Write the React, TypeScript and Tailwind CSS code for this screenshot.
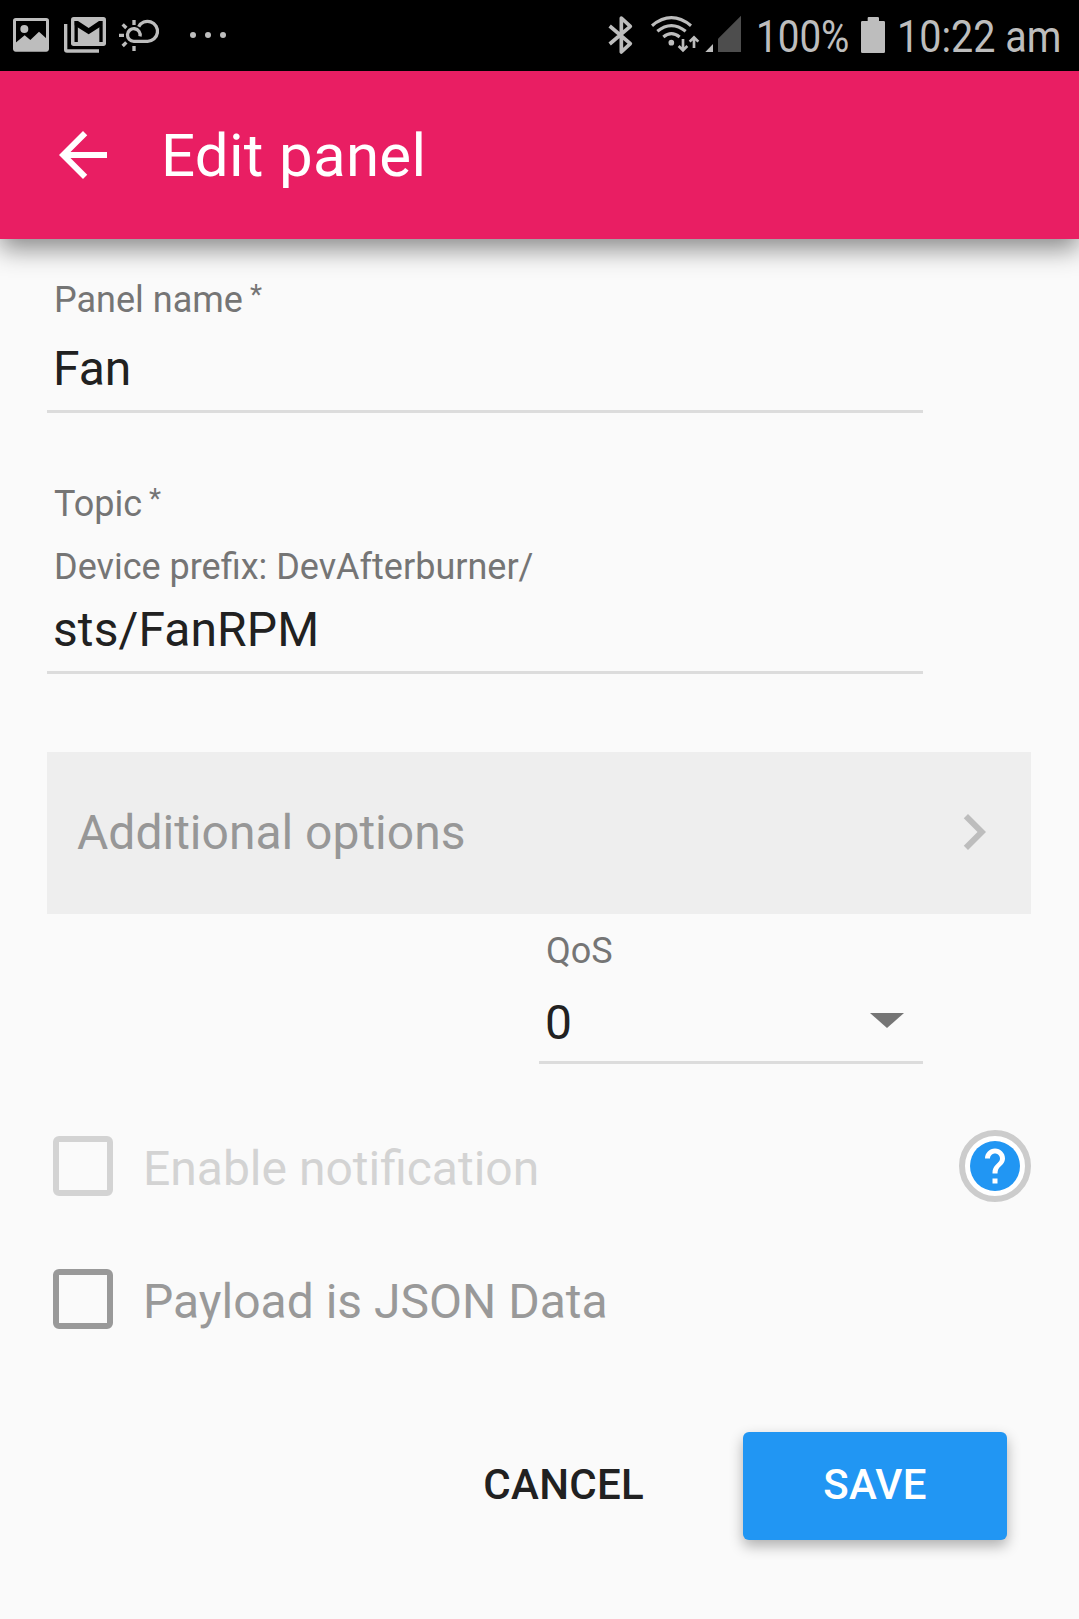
import type { ReactNode } from "react";

function PhotoIcon() {
  return (
    <svg viewBox="36 48 114 114" className="ml-3 h-[38px] w-[38px] shrink-0">
      <rect x="43.500" y="58.500" width="99" height="92" rx="4" fill="none" stroke="#bdbdbd" strokeWidth="9" />
      <circle cx="73" cy="87" r="12" fill="#bdbdbd" />
      <path d="M46 129 L74 106 L91 120 L117 95 L141 117 V151 H46Z" fill="#bdbdbd" />
    </svg>
  );
}

function MailStackIcon() {
  return (
    <svg viewBox="189 48 132 114" className="ml-[13px] h-[38px] w-11 shrink-0">
      <path d="M197 72 V149 Q197 153 201 153 H297" fill="none" stroke="#bdbdbd" strokeWidth="10" />
      <rect x="213" y="51" width="105" height="87" rx="8" fill="#bdbdbd" />
      <path d="M228.500 126 V76 M303 76 V126" fill="none" stroke="#000" strokeWidth="10" />
      <path d="M223 63 H234 L266 84 L297 63 H308 V76 L266 103 L223 76Z" fill="#000" />
    </svg>
  );
}

function WeatherIcon() {
  return (
    <svg viewBox="354 54 126 102" className="ml-[11px] h-[34px] w-[42px] shrink-0" fill="none" stroke="#bdbdbd" strokeWidth="10">
      <path d="M420 109 A19 19 0 1 0 402 124 H443 A30 30 0 1 0 416 80" />
      <path d="M402 60 V75 M402 138 V153 M357 106 H372 M368 73 L379 84 M368 138 L379 127" />
    </svg>
  );
}

function BluetoothIcon() {
  return (
    <svg viewBox="54 45 78 120" className="h-10 w-[26px] shrink-0" fill="none" stroke="#bdbdbd" strokeWidth="11" strokeLinejoin="round">
      <path d="M59 78 L121 131 L94 156 V54 L121 79 L59 132" />
    </svg>
  );
}

function WifiIcon() {
  return (
    <svg viewBox="180 45 150 114" className="-mt-0.5 ml-4 h-[38px] w-[50px] shrink-0" fill="none" stroke="#bdbdbd" strokeWidth="9.500">
      <path d="M186 77 Q244 29 303 77" />
      <path d="M202 94 Q244 60 287 94" />
      <path d="M220 111 Q244 91 269 111" />
      <circle cx="244" cy="128" r="8.500" fill="#bdbdbd" stroke="none" />
      <path d="M279 117 V150 M266 138 L279 151 L292 138" strokeWidth="8" />
      <path d="M312 144 V112 M299 125 L312 112 L325 125" strokeWidth="8" />
    </svg>
  );
}

function SignalIcon() {
  return (
    <svg viewBox="345 45 111 114" className="-mt-0.5 ml-[5px] h-[38px] w-[37px] shrink-0">
      <path d="M346 156 L369 132 V156Z" fill="#bdbdbd" />
      <path d="M384 156 V116 L453 47 V156Z" fill="#4d4d4d" />
    </svg>
  );
}

function BatteryIcon() {
  return (
    <svg viewBox="813 51 72 108" className="ml-[13px] h-9 w-6 shrink-0" fill="#bdbdbd">
      <path d="M833 63 V54 Q833 51 836 51 H863 Q867 51 867 54 V63 H881 Q885 63 885 67 V155 Q885 159 881 159 H817 Q813 159 813 155 V67 Q813 63 817 63Z" />
    </svg>
  );
}

function StatusBar() {
  return (
    <div className="flex h-[71px] items-center justify-between bg-black pb-px text-[#bdbdbd]">
      <div className="flex items-center">
        <PhotoIcon />
        <MailStackIcon />
        <WeatherIcon />
        <div className="ml-[30px] flex gap-[9px]">
          <span className="size-1.5 rounded-full bg-[#bdbdbd]" />
          <span className="size-1.5 rounded-full bg-[#bdbdbd]" />
          <span className="size-1.5 rounded-full bg-[#bdbdbd]" />
        </div>
      </div>
      <div className="flex items-center pr-[17px]">
        <BluetoothIcon />
        <WifiIcon />
        <SignalIcon />
        <div className="ml-3.5 w-[92px] pt-[3px]">
          <span className="inline-block origin-left scale-x-[0.858] whitespace-nowrap text-[45px] leading-[60px]">100%</span>
        </div>
        <BatteryIcon />
        <div className="ml-3 w-[165px] pt-[3px]">
          <span className="inline-block origin-left scale-x-[0.878] whitespace-nowrap text-[45px] leading-[60px]">10:22 am</span>
        </div>
      </div>
    </div>
  );
}

function Header() {
  return (
    <header className="flex h-[168px] items-center bg-[#e91e63] text-white shadow-[0_10px_24px_rgba(0,0,0,0.45)]">
      <button aria-label="Back" className="ml-[47px] size-[72px]">
        <svg viewBox="0 0 24 24" className="size-full" fill="currentColor">
          <path d="M20 11H7.830l5.590-5.590L12 4l-8 8 8 8 1.410-1.410L7.830 13H20v-2z" />
        </svg>
      </button>
      <h1 className="ml-[42px] pt-0.5 text-[60px] leading-[72px] tracking-[0.3px]">Edit panel</h1>
    </header>
  );
}

function Label({ children, required = false }: { children: ReactNode; required?: boolean }) {
  return (
    <div className="flex h-10 text-[36px] leading-[40px] text-[#757575]">
      <span>{children}</span>
      {required && <span className="ml-[7px] text-[28px] leading-[30px]">*</span>}
    </div>
  );
}

function CheckRow({ label, disabled = false }: { label: string; disabled?: boolean }) {
  return (
    <label className={disabled ? "flex h-[60px] text-[#d3d3d3]" : "flex h-[60px] text-[#999999]"}>
      <span className="size-[60px] rounded-[6px] border-[6px] border-current" />
      <span className="ml-[30px] pt-[3px] text-[48px] leading-[60px]">{label}</span>
    </label>
  );
}

export default function App() {
  return (
    <div className="flex h-[1619px] w-[1079px] flex-col overflow-hidden bg-[#fafafa] font-['Roboto',sans-serif] text-[#212121]">
      <StatusBar />
      <Header />
      <main className="flex flex-col pr-12 pl-[47px]">
        <section className="mt-[41px] w-[876px] border-b-[3px] border-[#dcdcdc] pb-[11px] pl-[7px]">
          <Label required>Panel name</Label>
          <div className="mt-[19px] -ml-px text-[48px] leading-[60px]">Fan</div>
        </section>

        <section className="mt-[71px] w-[876px] border-b-[3px] border-[#dcdcdc] pb-[11px] pl-[7px]">
          <Label required>Topic</Label>
          <div className="mt-[23px]">
            <Label>Device prefix: DevAfterburner/</Label>
          </div>
          <div className="mt-[13px] -ml-px text-[48px] leading-[60px] tracking-[0.1px]">sts/FanRPM</div>
        </section>

        <button className="mt-[78px] flex h-[162px] items-center justify-between bg-[#eeeeee] pr-[21px] pl-[30px] text-[#979797]">
          <span className="text-[48px] leading-[60px]">Additional options</span>
          <svg viewBox="0 0 24 24" className="-mt-0.5 size-[72px]" fill="#bdbdbd">
            <path d="M10 6L8.590 7.410 13.170 12l-4.580 4.590L10 18l6-6z" />
          </svg>
        </button>

        <section className="mt-[17px] ml-[492px] w-[384px] border-b-[3px] border-[#dcdcdc] pb-2 pl-[7px]">
          <Label>QoS</Label>
          <div className="mt-[22px] -ml-px flex items-center justify-between pr-[19.500px]">
            <span className="text-[48px] leading-[60px]">0</span>
            <svg viewBox="0 0 34 15" className="-mt-[5px] h-[15px] w-[34px]" fill="#757575">
              <path d="M0 0H34L17 15Z" />
            </svg>
          </div>
        </section>

        <div className="mt-[66px] flex h-[72px] items-center justify-between pl-1.5">
          <CheckRow label="Enable notification" disabled />
          <button aria-label="Help" className="flex size-[72px] items-center justify-center rounded-full border-[6px] border-[#cccccc] bg-white">
            <svg viewBox="2 2 20 20" className="size-[50px]">
              <circle cx="12" cy="12" r="10" fill="#2196f3" />
              <path d="M11 17h2v2h-2zM12 5c-2.210 0-4 1.790-4 4h2c0-1.100.9-2 2-2s2 .9 2 2c0 .550-.220 1.050-.590 1.410l-1.240 1.260C11.450 12.400 11 13.400 11 14.500v.5h2c0-1.500.450-2.100 1.170-2.830l.9-.920C15.640 10.680 16 9.880 16 9c0-2.210-1.790-4-4-4z" fill="#fff" />
            </svg>
          </button>
        </div>

        <div className="mt-[67px] pl-1.5">
          <CheckRow label="Payload is JSON Data" />
        </div>

        <div className="mt-[103px] flex items-center justify-end pr-6 text-[42px] leading-[60px] font-medium tracking-[0.3px]">
          <button className="mr-[99px] h-[108px] pb-0.5">CANCEL</button>
          <button className="h-[108px] w-[264px] rounded-[6px] bg-[#2196f3] pb-0.5 text-white shadow-[0_6px_14px_rgba(0,0,0,0.3)]">SAVE</button>
        </div>
      </main>
    </div>
  );
}
